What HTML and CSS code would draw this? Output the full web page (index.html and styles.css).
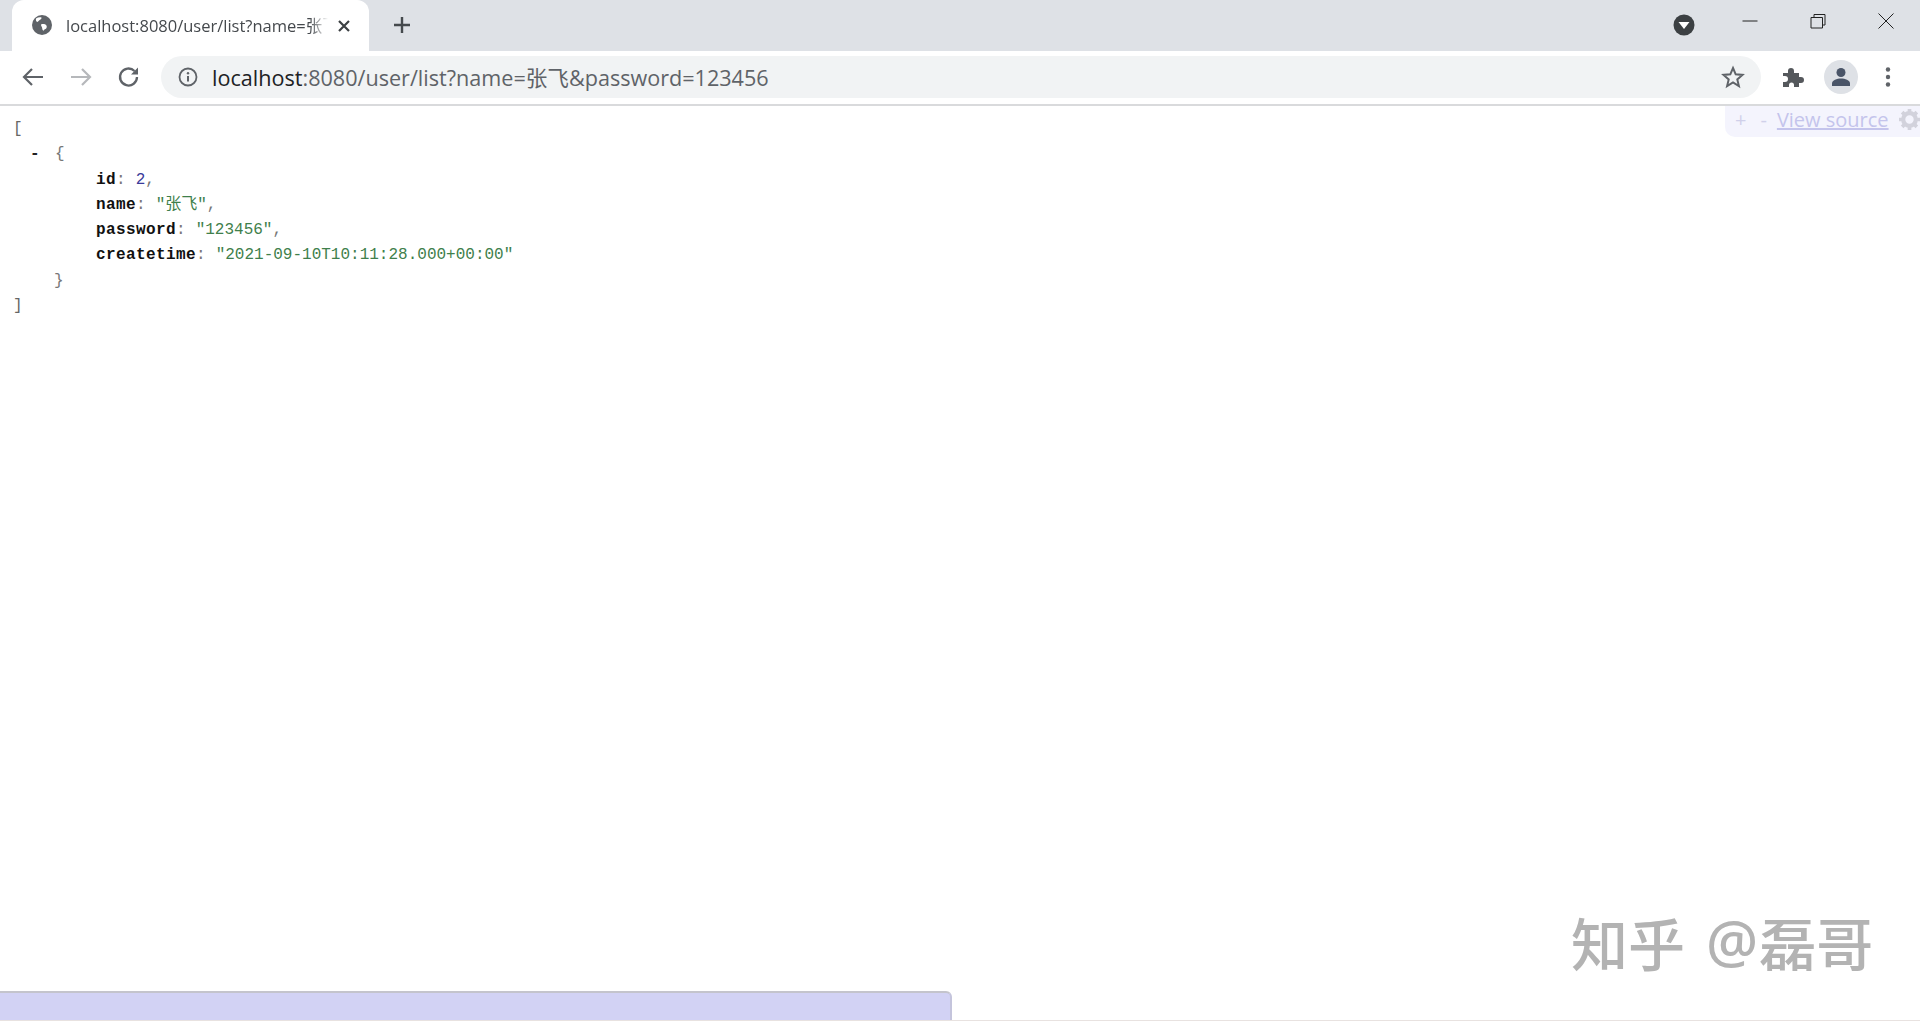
FILE: index.html
```html
<!DOCTYPE html>
<html lang="zh">
<head>
<meta charset="utf-8">
<title>localhost:8080/user/list?name=张飞</title>
<link rel="stylesheet" href="styles.css">
</head>
<body>
<div class="app">
  <header class="chrome">
    <div class="tabstrip">
      <div class="tab">
        <svg class="favicon" viewBox="0 0 20 20"><circle cx="10" cy="10" r="10" fill="#5f6368"/><path d="M4 3.500c1.800-1.200 4-1.500 5.500-1 .3 1.200-.8 2-1.800 2.600-1 .7-1.200 1.700-2.400 1.800C4.200 7 3.600 5 4 3.500zM9 9.500c1.800-.8 4-.6 5 .6 1 1 1 2.400.2 3.400-1 .5-2 1-2.700 2.200-.9-.5-1.200-1.500-1.300-2.500-.1-1.200-1.200-2-1.200-3.700z" fill="#fff"/></svg>
        <span class="tab-title">localhost:8080/user/list?name=张飞&amp;password=123456</span>
        <svg class="tab-close" viewBox="0 0 14 14"><path d="M2 2l10 10M12 2L2 12" stroke="#3c4043" stroke-width="2.200" fill="none"/></svg>
      </div>
      <svg class="newtab" viewBox="0 0 18 18"><path d="M9 1v16M1 9h16" stroke="#45494d" stroke-width="2.400" fill="none"/></svg>
      <div class="strip-space"></div>
      <svg class="tabsearch" viewBox="0 0 22 22"><circle cx="11" cy="11" r="10.500" fill="#3c4043"/><path d="M5.500 8h11L11 15z" fill="#fff"/></svg>
      <div class="winbtns">
        <svg class="winbtn" viewBox="0 0 18 18"><path d="M1.500 9h15" stroke="#222" stroke-width="1" fill="none"/></svg>
        <svg class="winbtn" viewBox="0 0 18 18"><path d="M2 5.500h11.500V16H2zM5 5.500V2.500h11v10.500h-2.500" stroke="#222" stroke-width="1" fill="none"/></svg>
        <svg class="winbtn" viewBox="0 0 18 18"><path d="M1.500 1.500l15 15M16.500 1.500l-15 15" stroke="#222" stroke-width="1" fill="none"/></svg>
      </div>
    </div>
    <div class="toolbar">
      <svg class="navicon" viewBox="0 0 24 24"><path d="M22 12H3.500M11 4l-8 8 8 8" stroke="#5f6368" stroke-width="2.200" fill="none"/></svg>
      <svg class="navicon" viewBox="0 0 24 24"><path d="M2 12h18.500M13 4l8 8-8 8" stroke="#b6b8bb" stroke-width="2.200" fill="none"/></svg>
      <svg class="navicon" viewBox="0 0 24 24"><path d="M20 12a8.500 8.500 0 1 1-2.500-6" stroke="#5f6368" stroke-width="2.300" fill="none"/><path d="M21 2.500V9.500h-7z" fill="#5f6368"/></svg>
      <div class="omnibox">
        <svg class="infoicon" viewBox="0 0 20 20"><circle cx="10" cy="10" r="8.500" stroke="#5f6368" stroke-width="1.800" fill="none"/><path d="M10 9v5.500" stroke="#5f6368" stroke-width="2" fill="none"/><circle cx="10" cy="6.300" r="1.200" fill="#5f6368"/></svg>
        <div class="url"><span class="host">localhost</span>:8080/user/list?name=张飞&amp;password=123456</div>
        <svg class="star" viewBox="0 0 24 24"><path d="M12 3l2.700 6.300 6.800.6-5.200 4.500 1.600 6.700-5.900-3.600-5.900 3.600 1.600-6.700-5.200-4.500 6.800-.6z" stroke="#5f6368" stroke-width="2" fill="none"/></svg>
      </div>
      <div class="tools">
        <svg class="extension" viewBox="0 0 22 22"><path d="M1 7h5V5a3 3 0 0 1 6 0v2h5v4h2a3 3 0 0 1 0 6h-2v4h-5v-2a2.500 2.500 0 0 0-5 0v2H1v-5h2a3 3 0 0 0 0-6H1z" fill="#55585c"/></svg>
        <div class="avatar"><svg viewBox="0 0 20 20"><circle cx="10" cy="5.500" r="4.500" fill="#4a5568"/><path d="M1 19v-2.500c0-3.500 5-5 9-5s9 1.500 9 5V19z" fill="#4a5568"/></svg></div>
        <svg class="menu" viewBox="0 0 6 22"><circle cx="3" cy="3.500" r="2.200" fill="#5f6368"/><circle cx="3" cy="11" r="2.200" fill="#5f6368"/><circle cx="3" cy="18.500" r="2.200" fill="#5f6368"/></svg>
      </div>
    </div>
  </header>
  <main class="page">
    <div class="json">
      <div class="line bracket">[</div>
      <div class="line level1"><span class="collapser">-</span><span class="punct">{</span></div>
      <div class="line level2"><span class="key">id</span><span class="punct">:</span> <span class="num">2</span><span class="punct">,</span></div>
      <div class="line level2"><span class="key">name</span><span class="punct">:</span> <span class="str">"张飞"</span><span class="punct">,</span></div>
      <div class="line level2"><span class="key">password</span><span class="punct">:</span> <span class="str">"123456"</span><span class="punct">,</span></div>
      <div class="line level2"><span class="key">createtime</span><span class="punct">:</span> <span class="str">"2021-09-10T10:11:28.000+00:00"</span></div>
      <div class="line close1"><span class="punct">}</span></div>
      <div class="line bracket">]</div>
    </div>
    <div class="viewer-controls">
      <span class="ctl">+</span><span class="ctl">-</span><a class="viewsource">View source</a>
      <svg class="gear" viewBox="0 0 20 20"><circle cx="10" cy="10" r="6" fill="none" stroke="#d2d2dc" stroke-width="4"/><path d="M10 0v20M0 10h20M3 3l14 14M17 3L3 17" stroke="#d2d2dc" stroke-width="3.500" stroke-dasharray="4 12"/></svg>
    </div>
    <div class="watermark"><span>知乎</span><span class="wm-at">@</span><span>磊哥</span></div>
  </main>
  <div class="hscroll"><div class="hthumb"></div></div>
</div>
</body>
</html>
```
FILE: styles.css
```css
* { box-sizing: border-box; }
html, body { margin: 0; height: 100%; background: #fff; overflow: hidden; }
.app { height: 1021px; display: flex; flex-direction: column; }
.chrome { flex: none; font-family: "Noto Sans", "Noto Sans CJK SC", sans-serif; }
.tabstrip { height: 51px; background: #dee1e6; display: flex; align-items: flex-start; padding-left: 12px; }
.tab { width: 357px; height: 51px; background: #fff; border-radius: 12px 12px 0 0; display: flex; align-items: center; padding: 0 15px 0 20px; }
.favicon { width: 20px; height: 20px; flex: none; margin-top: -1px; }
.tab-title { margin: -2px 0 0 14px; width: 262px; overflow: hidden; white-space: nowrap; font-size: 16.500px; color: #45494d; font-family: "Open Sans", "Noto Sans CJK SC", sans-serif; -webkit-mask-image: linear-gradient(to right, #000 93%, transparent 100%); mask-image: linear-gradient(to right, #000 93%, transparent 100%); }
.tab-close { width: 14px; height: 14px; margin-left: 9px; flex: none; }
.newtab { width: 18px; height: 18px; margin: 16px 0 0 24px; flex: none; }
.strip-space { flex: 1; }
.tabsearch { width: 22px; height: 22px; margin-top: 14px; flex: none; }
.winbtns { display: flex; gap: 50px; margin: 12px 25px 0 46px; }
.winbtn { width: 18px; height: 18px; flex: none; }
.toolbar { height: 55px; border-bottom: 2px solid #d9dadc; background: #fff; display: flex; align-items: center; padding: 0 0 2px 21px; }
.navicon { width: 24px; height: 24px; flex: none; margin-right: 24px; }
.omnibox { width: 1600px; height: 42px; margin-left: -4px; border-radius: 21px; background: #f1f3f4; display: flex; align-items: center; padding: 0 16px 0 17px; }
.infoicon { width: 20px; height: 20px; flex: none; }
.url { margin-left: 14px; flex: 1; font-size: 21.600px; color: #5f6368; white-space: nowrap; font-family: "Open Sans", "Noto Sans CJK SC", sans-serif; }
.host { color: #202124; }
.star { width: 24px; height: 24px; flex: none; }
.tools { display: flex; align-items: center; }
.extension { width: 22px; height: 22px; margin-left: 21px; flex: none; }
.avatar { width: 34px; height: 34px; border-radius: 50%; background: #dee1e6; margin-left: 20px; display: flex; align-items: center; justify-content: center; flex: none; }
.avatar svg { width: 20px; height: 20px; }
.menu { width: 6px; height: 22px; margin-left: 27px; flex: none; }
.page { flex: 1; position: relative; min-height: 0; }
.json { padding: 11px 0 0 13px; font-family: "Liberation Mono", "Noto Sans CJK SC", monospace; font-size: 16px; color: #444; }
.line { height: 25.300px; line-height: 25.300px; white-space: pre; }
.bracket { color: #666; }
.level1 { padding-left: 17px; }
.collapser { display: inline-block; width: 25px; color: #222; font-weight: 700; }
.level2 { padding-left: 83px; }
.close1 { padding-left: 41px; }
.key { font-weight: 700; color: #111; letter-spacing: .4px; }
.punct { color: #777; letter-spacing: .4px; }
.num { color: #3a3a9a; }
.str { color: #3f7f4c; }
.viewer-controls { position: absolute; top: 0; right: 0; width: 195px; height: 31px; padding: 0 0 4px 10px; background: #f4f4fd; border-radius: 0 0 0 10px; display: flex; align-items: center; gap: 14px; font-family: "Open Sans", sans-serif; font-size: 20px; color: #d0d0ea; white-space: nowrap; }
.viewsource { color: #c4c4ec; text-decoration: underline; margin-left: -4px; }
.gear { width: 21px; height: 21px; margin-left: -4px; flex: none; }
.watermark { position: absolute; left: 1571px; top: 800px; display: flex; align-items: center; gap: 21px; font-family: "Noto Sans CJK SC", sans-serif; font-weight: 500; font-size: 57px; line-height: 70px; color: #b3b3b3; }
.wm-at { font-family: "Noto Sans", sans-serif; font-size: 58px; margin-right: -20px; }
.hscroll { flex: none; height: 30px; border-bottom: 1px solid #e8e2e0; }
.hthumb { width: 952px; height: 29px; background: #d2d2f4; border-top: 2px solid #c4c4cc; border-right: 2px solid #c4c4dc; border-radius: 0 6px 0 0; }
```
